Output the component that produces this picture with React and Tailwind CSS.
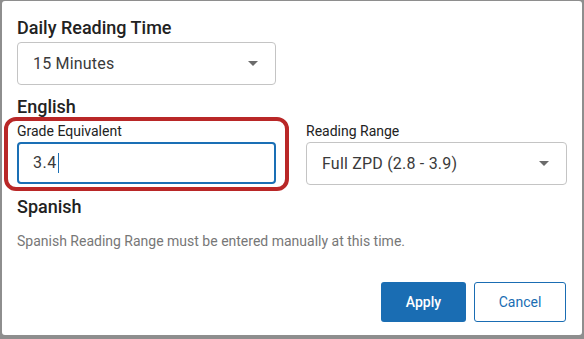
function Caret() {
  return (
    <svg width="10" height="5" viewBox="0 0 10 5" className="shrink-0">
      <path d="M0 0h10L5 5z" fill="#6b6b6b" />
    </svg>
  );
}

function SelectBox({ value, className = '' }) {
  return (
    <div className={`flex h-[43px] items-center justify-between rounded-[4px] border border-[#c4c4c4] bg-white pl-[15px] pr-[17px] ${className}`}>
      <span className="text-[16px] tracking-[0.2px] text-[#3a3a3a]">{value}</span>
      <Caret />
    </div>
  );
}

export default function App() {
  return (
    <div className="h-[339px] w-[584px] overflow-hidden bg-[#8e8e8e]" style={{ fontFamily: 'Roboto, "Liberation Sans", sans-serif' }}>
      <div className="ml-[2px] mt-[1px] flex h-[334px] w-[580px] flex-col rounded-[3px] bg-white pl-[15px]">
        <h2 className="mt-[15px] text-[18px] font-medium leading-[24px] text-[#222]">Daily Reading Time</h2>
        <SelectBox value="15 Minutes" className="mt-[2px] w-[259px]" />

        <h2 className="mt-[10px] text-[18px] font-medium leading-[24px] text-[#222]">English</h2>
        <div className="mt-[4px] flex gap-[30px]">
          <div className="relative w-[259px]">
            <div className="pointer-events-none absolute -left-[13px] -right-[13px] -top-[6px] -bottom-[6px] rounded-[12px] border-[4px] border-[#b92727]" />
            <label className="block text-[14px] leading-[16px] text-[#222]">Grade Equivalent</label>
            <div className="mt-[3px] flex h-[42px] items-center rounded-[4px] border-2 border-[#1a6fb5] pl-[14px]">
              <span className="text-[16px] tracking-[0.5px] text-[#3a3a3a]">3.4</span>
              <span className="ml-[1px] h-[20px] w-px bg-[#1a6fb5]" />
            </div>
          </div>
          <div className="w-[261px]">
            <label className="block text-[14px] leading-[16px] text-[#222]">Reading Range</label>
            <SelectBox value="Full ZPD (2.8 - 3.9)" className="mt-[3px] h-[42px]" />
          </div>
        </div>

        <h2 className="mt-[10px] text-[18px] font-medium leading-[24px] text-[#222]">Spanish</h2>
        <p className="mt-[14px] text-[14px] leading-[16px] text-[#777]">Spanish Reading Range must be entered manually at this time.</p>

        <div className="mt-[33px] flex justify-end gap-[8px] pr-[16px]">
          <button className="h-[40px] w-[85px] rounded-[3px] bg-[#1a6db3] text-[14px] font-medium text-white">Apply</button>
          <button className="h-[40px] w-[92px] rounded-[3px] border border-[#1a6db3] bg-white text-[14px] text-[#1a6db3]">Cancel</button>
        </div>
      </div>
    </div>
  );
}
